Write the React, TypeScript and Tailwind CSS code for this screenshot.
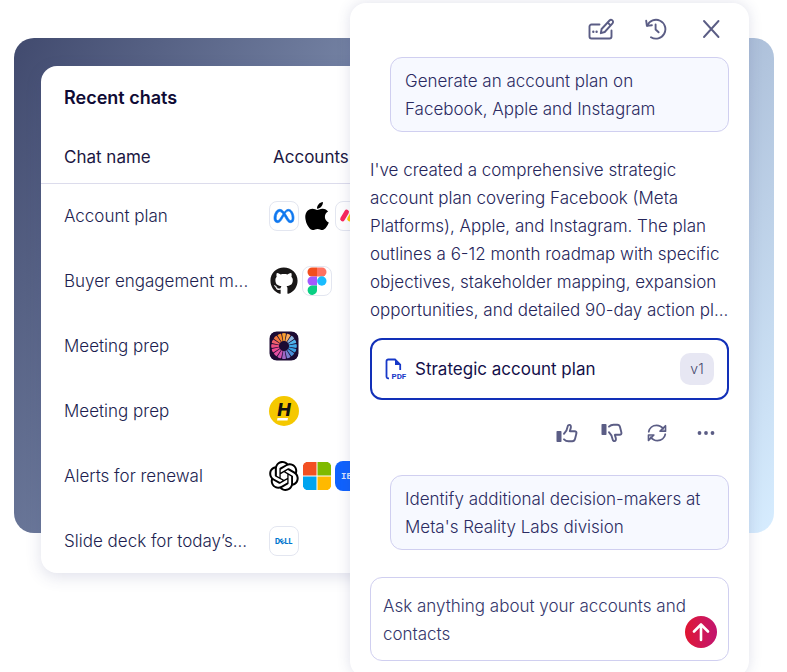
import type { ReactNode } from "react";
import { FaApple, FaGithub } from "react-icons/fa";
import { SiMeta } from "react-icons/si";
import { RiOpenaiFill } from "react-icons/ri";
import clsx from "clsx";

function Tile({ children, className }: { children: ReactNode; className?: string }) {
  return (
    <span
      className={clsx(
        "flex size-[30px] shrink-0 items-center justify-center overflow-hidden rounded-lg",
        className
      )}
    >
      {children}
    </span>
  );
}

function MetaLogo() {
  return (
    <Tile className="border border-[#e3e6f0] bg-white">
      <SiMeta className="size-5 overflow-visible stroke-[#0f78f0] stroke-[0.8] text-[#0f78f0]" />
    </Tile>
  );
}

function AppleLogo() {
  return (
    <Tile>
      <FaApple className="size-8 shrink-0 text-black" />
    </Tile>
  );
}

function MondayLogo() {
  return (
    <Tile className="border border-[#e3e6f0] bg-white">
      <svg viewBox="0 0 30 30" className="size-[30px] shrink-0" fill="none" strokeWidth="4.6" strokeLinecap="round">
        <path d="M7.500 18l4.200-7" stroke="#fb275d" />
        <path d="M14.500 18l4.200-7" stroke="#ffcc00" />
        <circle cx="22.500" cy="18" r="2.300" fill="#00ca72" />
      </svg>
    </Tile>
  );
}

function GithubLogo() {
  return (
    <Tile>
      <FaGithub className="size-7 text-[#191717]" />
    </Tile>
  );
}

function FigmaLogo() {
  return (
    <Tile className="border border-[#e3e6f0] bg-white">
      <svg viewBox="0 0 20 28" className="h-7 w-5 shrink-0">
        <path d="M10 .5v9H5a4.500 4.500 0 0 1 0-9z" fill="#f24e1e" />
        <path d="M10 .5h5a4.500 4.500 0 0 1 0 9h-5z" fill="#ff7262" />
        <path d="M10 9.500v9H5a4.500 4.500 0 0 1 0-9z" fill="#a259ff" />
        <circle cx="14.800" cy="14" r="4.700" fill="#1abcfe" />
        <path d="M5 18.500h5V23a4.700 4.700 0 1 1-5-4.500z" fill="#0acf83" />
      </svg>
    </Tile>
  );
}

const rays = [
  "#fba02e", "#fcab5a", "#8db4dc", "#52b4ea", "#3fa9e8", "#3a9fe0", "#4a8fd8", "#7a80d0",
  "#a066c4", "#cc55b0", "#e54fa2", "#ec4a90", "#ef4f80", "#f0606a", "#f5763f", "#f98b2b",
];

function BurstLogo() {
  return (
    <Tile>
      <svg viewBox="0 0 30 30" className="size-[30px]">
        <rect x=".5" y=".5" width="29" height="29" rx="7" fill="#1c0b33" />
        {rays.map((color, i) => (
          <path
            key={i}
            d="M14.300 10L13 2.600Q15 1.600 17 2.600L15.700 10z"
            fill={color}
            transform={`rotate(${i * 22.5} 15 15)`}
          />
        ))}
      </svg>
    </Tile>
  );
}

function HertzLogo() {
  return (
    <Tile>
      <svg viewBox="0 0 30 30" className="size-[30px]">
        <circle cx="15" cy="15" r="15" fill="#f5c800" />
        <text
          x="15"
          y="20"
          textAnchor="middle"
          fontFamily="Inter, sans-serif"
          fontStyle="italic"
          fontWeight="800"
          fontSize="18"
          fill="#111"
        >
          H
        </text>
        <path d="M8.500 22h10.500l-.5 2.500H8z" fill="#fff" />
      </svg>
    </Tile>
  );
}

function OpenAiLogo() {
  return (
    <Tile>
      <RiOpenaiFill className="size-9 shrink-0 text-black" />
    </Tile>
  );
}

function MicrosoftLogo() {
  return (
    <Tile>
      <svg viewBox="0 0 30 30" className="size-[30px]">
        <path d="M4 1h10.500v13.500H1V4a3 3 0 0 1 3-3z" fill="#f25022" />
        <path d="M15.500 1H26a3 3 0 0 1 3 3v10.500H15.500z" fill="#7fba00" />
        <path d="M1 15.500h13.500V29H4a3 3 0 0 1-3-3z" fill="#00a4ef" />
        <path d="M15.500 15.500H29V26a3 3 0 0 1-3 3H15.500z" fill="#ffb900" />
      </svg>
    </Tile>
  );
}

function IbmLogo() {
  return (
    <Tile className="bg-[#0f62fe]">
      <svg viewBox="0 0 30 30" className="size-[30px]">
        <text x="6" y="18" fontFamily="Liberation Mono, monospace" fontWeight="700" fontSize="9" fill="#d5e3ff">
          IBM
        </text>
      </svg>
    </Tile>
  );
}

function DellLogo() {
  return (
    <Tile className="border border-[#e3e6f0] bg-white">
      <svg viewBox="0 0 28 28" className="size-7" fontFamily="Inter, sans-serif" fontWeight="800" fontSize="7" fill="#0076ce">
        <text x="5" y="16.500">
          D
        </text>
        <text x="9.600" y="17" transform="rotate(-35 12 14)">
          E
        </text>
        <text x="14.500" y="16.500">
          LL
        </text>
      </svg>
    </Tile>
  );
}

const chats = [
  { name: "Account plan", logos: [MetaLogo, AppleLogo, MondayLogo] },
  { name: "Buyer engagement m...", logos: [GithubLogo, FigmaLogo] },
  { name: "Meeting prep", logos: [BurstLogo] },
  { name: "Meeting prep", logos: [HertzLogo] },
  { name: "Alerts for renewal", logos: [OpenAiLogo, MicrosoftLogo, IbmLogo] },
  { name: "Slide deck for today’s...", logos: [DellLogo] },
];

function RecentChats() {
  return (
    <section className="z-10 col-start-1 row-start-1 mt-[63px] -mr-6 ml-[27px] self-start overflow-hidden rounded-2xl bg-white pt-5 shadow-[0_4px_16px_rgba(60,70,130,0.16)]">
      <h2 className="mb-[21px] pl-[23px] text-lg leading-6 font-semibold text-[#0f0b35]">Recent chats</h2>
      <table className="w-full table-fixed border-collapse text-left text-[17px] leading-6 whitespace-nowrap">
        <thead>
          <tr className="h-[52px] border-b border-[#dcdcec] text-[#1b1742]">
            <th className="w-[228px] pl-[23px] font-normal">Chat name</th>
            <th className="pl-1 font-normal">Accounts</th>
          </tr>
        </thead>
        <tbody>
          {chats.map((chat, i) => (
            <tr key={i} className="h-[65px] text-[#211e50]">
              <td className="pl-[23px] font-light">{chat.name}</td>
              <td>
                <div className="flex gap-[3px]">
                  {chat.logos.map((Logo, j) => (
                    <Logo key={j} />
                  ))}
                </div>
              </td>
            </tr>
          ))}
        </tbody>
      </table>
    </section>
  );
}

function IconButton({ label, children }: { label: string; children: ReactNode }) {
  return (
    <button type="button" aria-label={label} className="flex size-[26px] items-center justify-center">
      {children}
    </button>
  );
}

function PanelHeader() {
  return (
    <header className="flex h-[54px] items-center justify-end gap-[29px] pr-[5px] pb-0.5 text-[#5b5d85]">
      <IconButton label="New chat">
        <svg viewBox="0 0 26 22" className="h-[22px] w-[26px]" fill="none" stroke="currentColor" strokeWidth="1.900" strokeLinecap="round" strokeLinejoin="round">
          <path d="M11.500 6.500H3.500a2 2 0 0 0-2 2v10a2 2 0 0 0 2 2h18a2 2 0 0 0 2-2v-6" />
          <path d="M12.800 15.200l.8-4.200 7.900-8.500a2 2 0 0 1 3 2.800l-7.800 8.700zM19.700 4.600l2.800 2.600" />
          <path d="M5.300 13.800h.01M8.600 13.800h.01" strokeWidth="2.400" />
        </svg>
      </IconButton>
      <IconButton label="History">
        <svg viewBox="0 0 22 22" className="size-[22px]" fill="none" stroke="currentColor" strokeWidth="1.900" strokeLinecap="round" strokeLinejoin="round">
          <path d="M2.300 7.600A9.400 9.400 0 1 1 6 19.200" />
          <path d="M1.200 2.800l.7 5.100 5-.7" />
          <path d="M10.600 6.500v5l3 2.800" />
        </svg>
      </IconButton>
      <IconButton label="Close">
        <svg viewBox="0 0 18 20" className="h-5 w-[18px]" fill="none" stroke="currentColor" strokeWidth="1.900" strokeLinecap="round">
          <path d="M2 2l14.500 16M16.500 2L2 18" />
        </svg>
      </IconButton>
    </header>
  );
}

function Prompt({ children }: { children: ReactNode }) {
  return (
    <p className="ml-5 rounded-xl border border-[#d0cff0] bg-[#f7f9ff] px-3.5 pt-[9px] pb-2 text-[#2b2b62]">
      {children}
    </p>
  );
}

function DocumentCard() {
  return (
    <button
      type="button"
      className="mt-3.5 flex h-[62px] w-full items-center rounded-xl border-2 border-[#1230b8] bg-white px-[13px] text-left"
    >
      <svg viewBox="0 0 22 22" className="size-[22px] shrink-0">
        <path d="M4 20.300H3.200a1.700 1.700 0 0 1-1.700-1.700V3.200a1.700 1.700 0 0 1 1.700-1.700H10l5.200 5.200V12" fill="none" stroke="#1738c8" strokeWidth="1.800" />
        <path d="M10 1l6 6h-6z" fill="#1738c8" />
        <text x="6.500" y="21" fontFamily="Roboto, sans-serif" fontWeight="700" fontSize="8" fill="#1738c8">
          PDF
        </text>
      </svg>
      <span className="ml-2 grow text-[17px] font-normal text-[#14104a]">Strategic account plan</span>
      <span className="flex h-8 w-[34px] items-center justify-center rounded-[10px] bg-[#e7e7f3] text-sm font-light text-[#45476b]">
        v1
      </span>
    </button>
  );
}

function ThumbUp({ className }: { className?: string }) {
  return (
    <svg viewBox="0 0 22 20" className={clsx("h-5 w-[22px]", className)} fill="none" stroke="currentColor" strokeWidth="1.900" strokeLinecap="round" strokeLinejoin="round">
      <rect x=".5" y="8" width="5" height="11" rx=".8" fill="currentColor" stroke="none" />
      <path d="M8 10.800C10 9 11.300 6.300 11.700 3.400c.3-2.300 3.400-2 3.200.7-.1 1.500-.8 2.900-1.100 4.100h4.700c1.600 0 2.200 1.100 1.900 2.400l-1.400 5.400c-.4 1.500-1.300 2.200-2.700 2.200h-3.800c-1.900 0-3.300-.7-4.500-1.900" />
    </svg>
  );
}

function MessageActions() {
  return (
    <div className="mt-5 flex justify-end gap-[19px] pr-2.5 text-[#5b5d85]">
      <IconButton label="Good response">
        <ThumbUp />
      </IconButton>
      <IconButton label="Bad response">
        <ThumbUp className="-scale-y-100" />
      </IconButton>
      <IconButton label="Regenerate">
        <svg viewBox="0 0 21 21" className="size-5" fill="none" stroke="currentColor" strokeWidth="1.800" strokeLinecap="round" strokeLinejoin="round">
          <path d="M1.800 9.200C2.500 5.200 6 2.500 10 2.500c2.900 0 5.300 1.300 7 3.600" />
          <path d="M19.400 2.900v5.700h-5.600z" />
          <path d="M19.200 11.800c-.7 4-4.200 6.700-8.200 6.700-2.900 0-5.300-1.300-7-3.600" />
          <path d="M1.600 18.300v-5.700h5.600z" />
        </svg>
      </IconButton>
      <button type="button" aria-label="More" className="ml-1 flex size-[26px] items-center justify-center">
        <svg viewBox="0 0 18 4" className="h-1 w-[18px]" fill="currentColor">
          <circle cx="2.500" cy="2" r="1.900" />
          <circle cx="9" cy="2" r="1.900" />
          <circle cx="15.500" cy="2" r="1.900" />
        </svg>
      </button>
    </div>
  );
}

function Composer() {
  return (
    <form
      className="mt-[27px] flex items-end justify-between rounded-xl border border-[#d0cff0] bg-white pt-3.5 pr-[11px] pb-3 pl-3"
      onSubmit={(e) => e.preventDefault()}
    >
      <textarea
        rows={2}
        aria-label="Message"
        placeholder="Ask anything about your accounts and contacts"
        className="block h-14 min-w-0 grow resize-none overflow-hidden outline-none placeholder:text-[#34366a] placeholder:opacity-100"
      />
      <button
        type="submit"
        aria-label="Send"
        className="-ml-2 flex size-8 shrink-0 items-center justify-center rounded-full bg-linear-to-r from-[#e0142f] to-[#c2136e] text-white"
      >
        <svg viewBox="0 0 20 20" className="size-5" fill="none" stroke="currentColor" strokeWidth="2.600" strokeLinecap="round" strokeLinejoin="round">
          <path d="M10 18V2.500M3 9.500l7-7 7 7" />
        </svg>
      </button>
    </form>
  );
}

function Assistant() {
  return (
    <aside className="z-20 col-start-2 row-start-1 mr-[25px] rounded-2xl bg-white px-5 pb-4 text-[17px] leading-7 font-light shadow-[0_0_14px_rgba(60,70,130,0.16)]">
      <PanelHeader />
      <Prompt>
        Generate an account plan on
        <br />
        Facebook, Apple and Instagram
      </Prompt>
      <p className="mt-6 whitespace-nowrap text-[#25255a]">
        I've created a comprehensive strategic
        <br />
        account plan covering Facebook (Meta
        <br />
        Platforms), Apple, and Instagram. The plan
        <br />
        outlines a 6-12 month roadmap with specific
        <br />
        objectives, stakeholder mapping, expansion
        <br />
        opportunities, and detailed 90-day action pl...
      </p>
      <DocumentCard />
      <MessageActions />
      <div className="mt-[29px]">
        <Prompt>
          Identify additional decision-makers at
          <br />
          Meta's Reality Labs division
        </Prompt>
      </div>
      <Composer />
    </aside>
  );
}

export default function App() {
  return (
    <main className="grid max-h-screen grid-cols-[minmax(0,1fr)_424px] overflow-hidden bg-white pt-[3px] pr-[13px] pl-3.5 font-['Inter',sans-serif]">
      <div className="col-span-2 col-start-1 row-start-1 mt-[35px] h-[495px] rounded-[20px] bg-linear-[118deg] from-[#414a6e] via-[#8b9bbb] to-[#d7edff]" />
      <RecentChats />
      <Assistant />
    </main>
  );
}
